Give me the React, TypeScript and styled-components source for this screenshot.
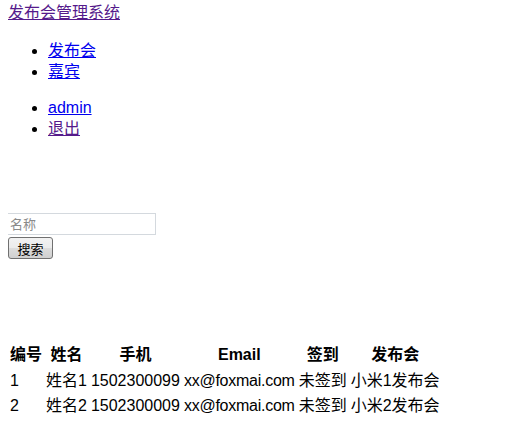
import React from "react";
import styled, { createGlobalStyle } from "styled-components";

const Global = createGlobalStyle`
  body {
    margin: 2px 8px 8px;
    font-family: "Liberation Sans", Arial, "Noto Sans CJK SC", sans-serif;
    font-size: 16px;
    line-height: 21px;
    color: #000;
    background: #fff;
  }
`;

const Link = styled.a<{ $visited?: boolean }>`
  color: ${(p) => (p.$visited ? "#551a8b" : "#0000ee")};
  text-decoration: underline;
`;

const Brand = styled.div`
  margin-bottom: 17px;
`;

const Menu = styled.ul`
  margin: 15px 0;
  padding-left: 40px;
  list-style: disc;
`;

const SearchForm = styled.form`
  margin-top: 74px;
  display: flex;
  flex-direction: column;
  align-items: flex-start;
  gap: 2px;
`;

const Input = styled.input`
  width: 149px;
  height: 22px;
  margin-left: -1px;
  box-sizing: border-box;
  border: 1px solid #d4d9de;
  font-family: "Liberation Sans", Arial, "Noto Sans CJK SC", sans-serif;
  font-size: 13px;
  padding: 1px 2px;
  &::placeholder {
    color: #8a8a8a;
  }
`;

const Button = styled.button`
  width: 45px;
  height: 22px;
  padding: 0;
  font-family: "Liberation Sans", Arial, "Noto Sans CJK SC", sans-serif;
  font-size: 13px;
  border: 1px solid #707070;
  border-radius: 3px;
  background: linear-gradient(#f2f2f2 0%, #ebebeb 50%, #dddddd 51%, #cfcfcf 100%);
  color: #000;
`;

const Table = styled.table`
  margin-top: 82px;
  margin-left: -1px;
  border-spacing: 2px;
  line-height: 21px;
`;

const Th = styled.th`
  padding: 1px 1px 2px;
  font-weight: bold;
  text-align: center;
`;

const Td = styled.td<{ $tight?: boolean }>`
  padding: 1px;
  text-align: left;
  letter-spacing: ${(p) => (p.$tight ? "-0.25px" : "normal")};
`;

const rows = [
  { id: 1, name: "姓名1", phone: "1502300099", email: "xx@foxmai.com", sign: "未签到", conf: "小米1发布会" },
  { id: 2, name: "姓名2", phone: "1502300009", email: "xx@foxmai.com", sign: "未签到", conf: "小米2发布会" },
];

export default function App() {
  return (
    <>
      <Global />
      <Brand>
        <Link href="#" $visited>发布会管理系统</Link>
      </Brand>
      <Menu>
        <li><Link href="#">发布会</Link></li>
        <li><Link href="#">嘉宾</Link></li>
      </Menu>
      <Menu>
        <li><Link href="#">admin</Link></li>
        <li><Link href="#" $visited>退出</Link></li>
      </Menu>
      <SearchForm onSubmit={(e) => e.preventDefault()}>
        <Input placeholder="名称" />
        <Button type="submit">搜索</Button>
      </SearchForm>
      <Table>
        <thead>
          <tr>
            <Th>编号</Th>
            <Th>姓名</Th>
            <Th>手机</Th>
            <Th>Email</Th>
            <Th>签到</Th>
            <Th>发布会</Th>
          </tr>
        </thead>
        <tbody>
          {rows.map((r) => (
            <tr key={r.id}>
              <Td>{r.id}</Td>
              <Td>{r.name}</Td>
              <Td>{r.phone}</Td>
              <Td $tight>{r.email}</Td>
              <Td>{r.sign}</Td>
              <Td>{r.conf}</Td>
            </tr>
          ))}
        </tbody>
      </Table>
    </>
  );
}
